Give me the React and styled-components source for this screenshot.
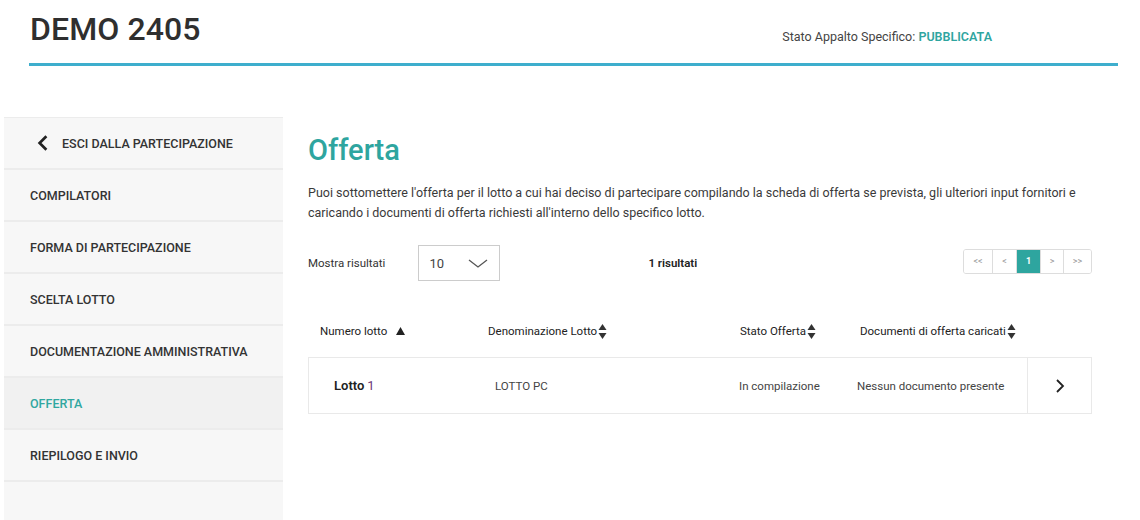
import React from "react";
import styled, { createGlobalStyle } from "styled-components";

const GlobalStyle = createGlobalStyle`
  body {
    margin: 0;
    background: #ffffff;
    font-family: Roboto, "Liberation Sans", sans-serif;
    color: #333333;
  }
`;

const Page = styled.div`
  width: 1140px;
  height: 520px;
  overflow: hidden;
`;

const Header = styled.header`
  margin: 0 22px 0 29px;
  padding: 10px 0 0 1px;
  height: 53px;
  display: flex;
  align-items: flex-start;
  justify-content: space-between;
  border-bottom: 3px solid #3eaecd;
`;

const Title = styled.h1`
  margin: 0;
  font-size: 32px;
  font-weight: 500;
  color: #2f2f2f;
  letter-spacing: 0.1px;
`;

const Status = styled.div`
  margin: 19px 126px 0 0;
  font-size: 12.5px;
  color: #444;
  b {
    color: #2ea59f;
    font-weight: 600;
  }
`;

const Body = styled.div`
  display: flex;
  margin-top: 51px;
  padding-left: 4px;
  gap: 25px;
`;

const Sidebar = styled.nav`
  width: 279px;
  height: 403px;
  background: #f7f7f7;
  border-top: 1px solid #ececec;
  display: flex;
  flex-direction: column;
`;

const NavItem = styled.div`
  height: 50px;
  border-bottom: 2px solid #ececec;
  display: flex;
  align-items: center;
  gap: 10px;
  padding-left: ${(p) => (p.$back ? "30px" : "26px")};
  font-size: 12.5px;
  font-weight: 500;
  background: ${(p) => (p.$active ? "#f1f1f1" : "transparent")};
  color: ${(p) => (p.$active ? "#30a7a0" : "#333")};
`;

const Main = styled.main`
  width: 784px;
  display: flex;
  flex-direction: column;
`;

const Heading = styled.h2`
  margin: 16px 0 0;
  font-size: 29px;
  font-weight: 500;
  color: #2ea59f;
`;

const Intro = styled.p`
  margin: 16px 0 0;
  font-size: 12.5px;
  line-height: 20px;
  color: #3a3a3a;
`;

const Controls = styled.div`
  margin-top: 22px;
  height: 36px;
  display: flex;
  align-items: center;
  font-size: 11.5px;
`;

const Select = styled.div`
  margin-left: 33px;
  width: 82px;
  height: 36px;
  border: 1px solid #cccccc;
  box-sizing: border-box;
  display: flex;
  align-items: center;
  justify-content: space-between;
  padding: 0 10px;
  font-size: 13px;
  color: #444;
`;

const Count = styled.div`
  margin-left: 148px;
  font-weight: 600;
  color: #222;
`;

const Pager = styled.div`
  margin-left: auto;
  margin-top: -4px;
  display: flex;
  border: 1px solid #dddddd;
  border-radius: 3px;
  overflow: hidden;
  height: 23px;
`;

const PageBtn = styled.div`
  width: ${(p) => p.$w}px;
  box-sizing: border-box;
  display: flex;
  align-items: center;
  justify-content: center;
  font-size: 9px;
  color: ${(p) => (p.$active ? "#fff" : "#999")};
  background: ${(p) => (p.$active ? "#2ea59f" : "#fff")};
  font-weight: ${(p) => (p.$active ? 700 : 400)};
  border-left: ${(p) => (p.$first ? "none" : "1px solid #dddddd")};
`;

const HeadRow = styled.div`
  margin-top: 32px;
  height: 36px;
  display: grid;
  grid-template-columns: 180px 252px 120px 1fr;
  align-items: center;
  font-size: 11.5px;
  color: #222;
`;

const HeadCell = styled.div`
  display: flex;
  align-items: center;
  gap: ${(p) => p.$gap || 1}px;
  padding-left: ${(p) => p.$pad || 0}px;
`;

const Row = styled.div`
  margin-top: 8px;
  height: 57px;
  border: 1px solid #e9e9e9;
  display: grid;
  grid-template-columns: 186px 244px 118px 170px 1fr;
  align-items: center;
  font-size: 11.5px;
  color: #444;
  box-sizing: border-box;
`;

const Cell = styled.div`
  padding-left: ${(p) => p.$pad || 0}px;
  b {
    font-size: 13px;
    font-weight: 600;
    color: #222;
  }
  span {
    font-size: 13px;
    color: #6b3a78;
  }
`;

const Arrow = styled.div`
  height: 100%;
  border-left: 1px solid #e9e9e9;
  display: flex;
  align-items: center;
  justify-content: center;
`;

const Sort = () => (
  <svg width="9" height="17" viewBox="0 0 9 17">
    <path d="M4.5 1 L8.5 7 L0.5 7 Z" fill="#333" />
    <path d="M4.5 16 L8.5 10 L0.5 10 Z" fill="#333" />
  </svg>
);

const Chevron = ({ dir = "right", size = 16, color = "#222", width = 2 }) => {
  const d = {
    right: "M5 2 L11 8 L5 14",
    left: "M11 2 L5 8 L11 14",
    down: "M1 4 L10 11 L19 4",
  }[dir];
  const vb = dir === "down" ? "0 0 20 14" : "0 0 16 16";
  return (
    <svg width={dir === "down" ? 22 : size} height={dir === "down" ? 14 : size} viewBox={vb}>
      <path d={d} fill="none" stroke={color} strokeWidth={width} />
    </svg>
  );
};

const navItems = [
  "COMPILATORI",
  "FORMA DI PARTECIPAZIONE",
  "SCELTA LOTTO",
  "DOCUMENTAZIONE AMMINISTRATIVA",
  "OFFERTA",
  "RIEPILOGO E INVIO",
];

export default function App() {
  return (
    <Page>
      <GlobalStyle />
      <Header>
        <Title>DEMO 2405</Title>
        <Status>
          Stato Appalto Specifico: <b>PUBBLICATA</b>
        </Status>
      </Header>
      <Body>
        <Sidebar>
          <NavItem $back>
            <Chevron dir="left" size={18} width={2.4} />
            ESCI DALLA PARTECIPAZIONE
          </NavItem>
          {navItems.map((item) => (
            <NavItem key={item} $active={item === "OFFERTA"}>
              {item}
            </NavItem>
          ))}
        </Sidebar>
        <Main>
          <Heading>Offerta</Heading>
          <Intro>
            Puoi sottomettere l'offerta per il lotto a cui hai deciso di partecipare compilando la
            scheda di offerta se prevista, gli ulteriori input fornitori e caricando i documenti di
            offerta richiesti all'interno dello specifico lotto.
          </Intro>
          <Controls>
            Mostra risultati
            <Select>
              10
              <Chevron dir="down" color="#555" width={1.3} />
            </Select>
            <Count>1 risultati</Count>
            <Pager>
              <PageBtn $w={28} $first>&lt;&lt;</PageBtn>
              <PageBtn $w={24}>&lt;</PageBtn>
              <PageBtn $w={24} $active>1</PageBtn>
              <PageBtn $w={23}>&gt;</PageBtn>
              <PageBtn $w={28}>&gt;&gt;</PageBtn>
            </Pager>
          </Controls>
          <HeadRow>
            <HeadCell $pad={12} $gap={9}>
              Numero lotto
              <svg width="9" height="8" viewBox="0 0 9 8">
                <path d="M4.5 0 L9 8 L0 8 Z" fill="#222" />
              </svg>
            </HeadCell>
            <HeadCell>
              Denominazione Lotto <Sort />
            </HeadCell>
            <HeadCell>
              Stato Offerta <Sort />
            </HeadCell>
            <HeadCell>
              Documenti di offerta caricati <Sort />
            </HeadCell>
          </HeadRow>
          <Row>
            <Cell $pad={25}>
              <b>Lotto</b> <span>1</span>
            </Cell>
            <Cell>LOTTO PC</Cell>
            <Cell>In compilazione</Cell>
            <Cell>Nessun documento presente</Cell>
            <Arrow>
              <Chevron dir="right" size={16} width={1.8} />
            </Arrow>
          </Row>
        </Main>
      </Body>
    </Page>
  );
}
